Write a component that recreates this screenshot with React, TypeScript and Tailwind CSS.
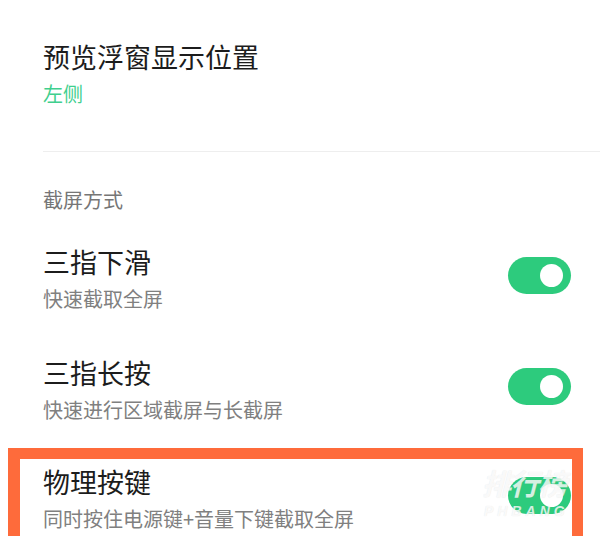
import React from "react";

const CJK = { fontFamily: '"Noto Sans CJK SC", "Noto Sans", sans-serif' };

function Toggle() {
  return (
    <div className="mt-[14px] mr-[29px] flex h-[37px] w-[63px] shrink-0 items-center justify-end rounded-full bg-[#2dcb7d] pr-[8px]">
      <div className="h-[23px] w-[23px] rounded-full bg-white" />
    </div>
  );
}

function Row({ title, sub, className = "" }: { title: string; sub: string; className?: string }) {
  return (
    <div className={"flex items-start justify-between " + className}>
      <div className="flex flex-col">
        <div className="text-[27px] leading-[38px] text-[#1c1c1c]">{title}</div>
        <div className="text-[20px] leading-[36px] text-[#808080]">{sub}</div>
      </div>
      <Toggle />
    </div>
  );
}

export default function App() {
  return (
    <div className="relative h-[536px] w-[600px] overflow-hidden bg-white" style={CJK}>
      <div className="flex flex-col pl-[43px] pt-[38px]">
        <div className="text-[27px] leading-[38px] text-[#1c1c1c]">预览浮窗显示位置</div>
        <div className="text-[20px] leading-[36px] text-[#3fcf8e]">左侧</div>
        <div className="mt-[39px] h-px bg-[#eeeeee]" />
        <div className="mt-[33px] text-[20px] leading-[30px] text-[#767676]">截屏方式</div>
        <Row className="mt-[28px]" title="三指下滑" sub="快速截取全屏" />
        <Row className="mt-[37px]" title="三指长按" sub="快速进行区域截屏与长截屏" />
        <Row className="mt-[35px]" title="物理按键" sub="同时按住电源键+音量下键截取全屏" />
      </div>

      {/* highlight annotation */}
      <div className="pointer-events-none absolute left-[8px] top-[448px] h-[120px] w-[575px] border-[12px] border-b-0 border-[#fe6b3b] border-t-[11px] border-r-[11px]" />

      {/* watermark */}
      <div
        className="pointer-events-none absolute left-[482px] top-[461px] flex flex-col items-start italic font-bold text-white/80"
        style={{ textShadow: "0 0 1px rgba(0,0,0,0.12)" }}
      >
        <div className="text-[29px] leading-[42px] tracking-[-1px]">排行榜</div>
        <div className="pl-[2px] text-[14px] leading-[16px] tracking-[4px]" style={{ fontFamily: '"Liberation Sans", sans-serif' }}>
          PHBANG
        </div>
      </div>
    </div>
  );
}
